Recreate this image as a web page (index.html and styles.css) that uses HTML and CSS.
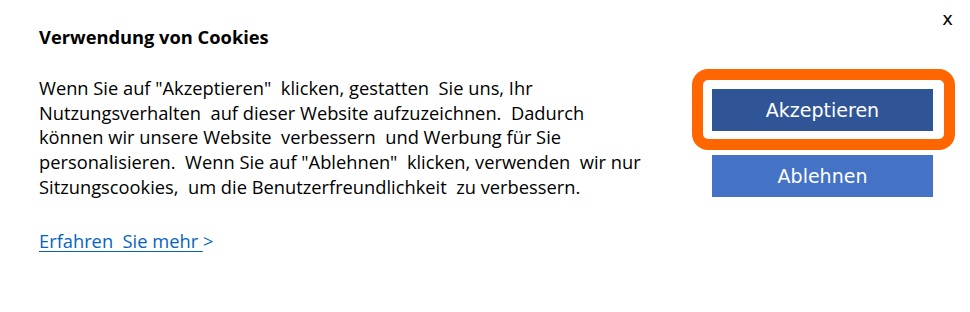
FILE: index.html
```html
<!DOCTYPE html>
<html lang="de">
<head>
<meta charset="utf-8">
<link rel="stylesheet" href="styles.css">
</head>
<body>
<div class="banner">
  <div class="content">
    <h2 class="title">Verwendung von Cookies</h2>
    <p class="text">Wenn Sie auf "Akzeptieren"&nbsp; klicken, gestatten&nbsp; Sie uns, Ihr<br>Nutzungsverhalten&nbsp; auf dieser Website aufzuzeichnen.&nbsp; Dadurch<br>können wir unsere Website&nbsp; verbessern&nbsp; und Werbung für Sie<br>personalisieren.&nbsp; Wenn Sie auf "Ablehnen"&nbsp; klicken, verwenden&nbsp; wir nur<br>Sitzungscookies,&nbsp; um die Benutzerfreundlichkeit&nbsp; zu verbessern.</p>
    <a class="more" href="#"><span class="more-link">Erfahren&nbsp; Sie mehr </span>&gt;</a>
  </div>
  <div class="actions">
    <div class="accept-wrap">
      <button class="btn btn-accept">Akzeptieren</button>
      <span class="ring"></span>
    </div>
    <button class="btn btn-reject">Ablehnen</button>
  </div>
  <span class="close">x</span>
</div>
</body>
</html>
```
FILE: styles.css
```css
html, body {
  margin: 0;
  padding: 0;
  background: #ffffff;
}
.banner {
  position: relative;
  width: 970px;
  height: 312px;
  display: flex;
  justify-content: space-between;
  box-sizing: border-box;
  padding: 25px 37px 0 39px;
  font-family: "Open Sans", "Noto Sans", sans-serif;
  color: #000;
}
.content {
  display: flex;
  flex-direction: column;
}
.title {
  margin: 0;
  font-size: 18.3px;
  font-weight: 700;
  line-height: 24px;
}
.text {
  margin: 27px 0 0 0;
  font-size: 18.3px;
  line-height: 24.7px;
}
.more {
  margin-top: 29px;
  font-size: 18.3px;
  line-height: 24px;
  color: #0563c1;
  text-decoration: none;
}
.more-link {
  text-decoration: underline;
  text-underline-offset: 3px;
}
.actions {
  display: flex;
  flex-direction: column;
  gap: 24px;
  margin-top: 64px;
}
.accept-wrap {
  position: relative;
}
.btn {
  display: block;
  width: 221px;
  height: 42px;
  border: 0;
  margin: 0;
  padding: 0;
  color: #ffffff;
  font-family: "DejaVu Sans", sans-serif;
  font-size: 19px;
  cursor: pointer;
}
.btn-accept {
  background: #2f5597;
}
.btn-reject {
  background: #4472c4;
}
.ring {
  position: absolute;
  left: -20px;
  top: -20px;
  width: 263px;
  height: 81px;
  box-sizing: border-box;
  border: 11px solid #ff6600;
  border-radius: 16px;
}
.close {
  position: absolute;
  right: 17px;
  top: 8px;
  font-family: "DejaVu Sans", sans-serif;
  font-size: 18px;
  color: #000;
}
```
